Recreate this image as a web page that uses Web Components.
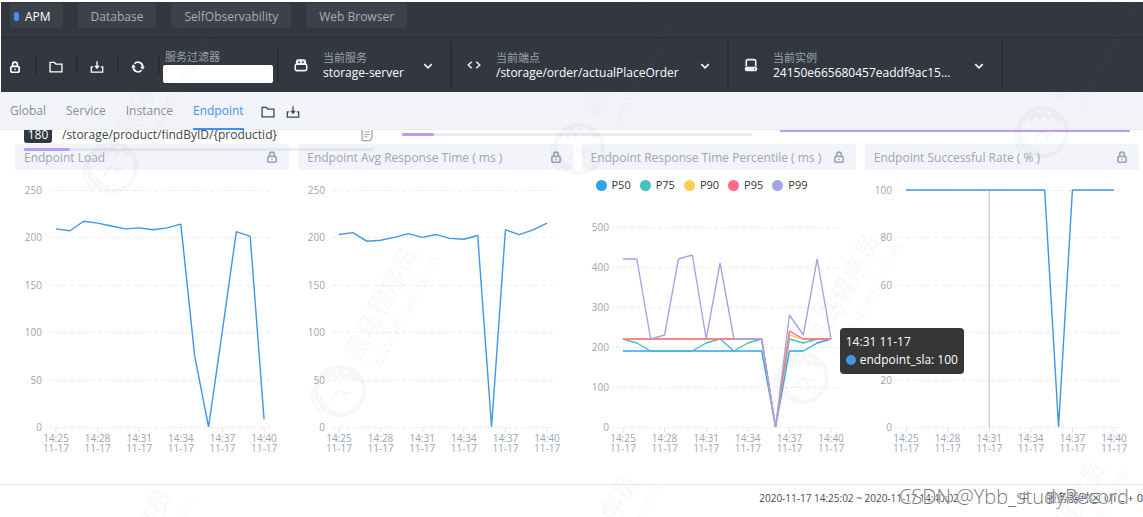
<!DOCTYPE html>
<html lang="zh-CN">
<head>
<meta charset="utf-8">
<title>APM Dashboard</title>
<style>
  html, body { margin: 0; }
  body { font-family: "Open Sans", "Noto Sans", "Noto Sans CJK SC", sans-serif; font-size: 12px; color: #3d444f; background: #fff; }
</style>
</head>
<body>
<apm-app></apm-app>

<script>
const define = (name, html, setup) => {
  const template = document.createElement('template');
  template.innerHTML = html;
  customElements.define(name, class extends HTMLElement {
    constructor() {
      super();
      this.attachShadow({ mode: 'open' }).append(template.content.cloneNode(true));
    }
    connectedCallback() { if (setup) setup(this, this.shadowRoot); }
  });
};

const ICONS = {
  lock: '<rect x="3.2" y="7.2" width="9.6" height="6.8" rx="2" stroke-width="1.9"/><path d="M5.3 7V5.1a2.7 2.7 0 0 1 5.4 0V7" stroke-width="1.9"/><path d="M8 9.8v1.8" stroke-width="1.5"/>',
  folder: '<path d="M1.2 13.6V2.8h5l1.8 2h6.8v8.8z" stroke-width="1.5"/>',
  download: '<path d="M3.6 7.8H1.5v6h13v-6h-2.1" stroke-width="1.5"/><path d="M8 1.5v6" stroke-width="1.5"/><path d="M4.8 6.6h6.4L8 10.6z" fill="currentColor" stroke="none"/>',
  refresh: '<path d="M4 4.3A5.4 5.4 0 0 1 13.4 8M12 11.7A5.4 5.4 0 0 1 2.6 8" stroke-width="2"/><path d="M10.6 7.6h5.2l-2.6 3.6zM.2 8.4h5.2L2.8 4.8z" fill="currentColor" stroke="none"/>',
  service: '<path d="M2.8 7V4.2a2 2 0 0 1 2-2h6.4a2 2 0 0 1 2 2V7" fill="currentColor" stroke-width="1.4"/><circle cx="5.8" cy="4.8" r="1.1" fill="#333840" stroke="none"/><circle cx="10.2" cy="4.8" r="1.1" fill="#333840" stroke="none"/><rect x="1.4" y="7.2" width="13.2" height="7.2" rx="1.8" stroke-width="1.8"/>',
  code: '<path d="M5.4 4.2 1.4 8l4 3.8M10.6 4.2l4 3.8-4 3.8" stroke-width="1.7"/>',
  instance: '<path d="M2.6 9.6V3.8a2 2 0 0 1 2-2h6.8a2 2 0 0 1 2 2v5.8" stroke-width="1.9"/><rect x="1" y="10" width="14" height="5" rx="1.8" fill="currentColor" stroke="none"/><circle cx="12" cy="12.5" r=".8" fill="#333840" stroke="none"/>',
  chevron: '<path d="M3 5.6 8 10.4l5-4.8" stroke-width="2.4"/>',
  note: '<path d="M2.4 1.4h11.2v10.4l-2.4 2.6H4a1.6 1.6 0 0 1-1.6-1.6z" stroke-width="1.5"/><path d="M5 4.6h6M5 7.4h6M5 10.2h3.4" stroke-width="1.3"/>'
};

const flat = (v, n) => Array(n).fill(v);
const CHARTS = {
  load: [{ color: '#3f96e3', data: [209, 207, 217, 215, 212, 209, 210, 208, 210, 214, 75, 0, 102, 206, 201, 8] }],
  avg: [{ color: '#3f96e3', data: [203, 205, 196, 197, 200, 204, 200, 203, 199, 198, 202, 0, 208, 203, 208, 215] }],
  percentile: [
    { color: '#30a4eb', data: [...flat(190, 11), 0, 190, 190, 210, 220] },
    { color: '#45bfc0', data: [220, 210, 190, 190, 190, 190, 210, 220, 190, 210, 220, 0, 220, 210, 220, 220] },
    { color: '#ffcc55', data: [...flat(220, 11), 0, 230, 220, 220, 220] },
    { color: '#ff6a84', data: [...flat(220, 11), 0, 240, 220, 220, 220] },
    { color: '#a0a7e6', data: [420, 420, 220, 230, 420, 430, 220, 410, 220, 220, 220, 0, 280, 230, 420, 220] }
  ],
  sla: [{ color: '#3f96e3', data: [...flat(100, 11), 0, ...flat(100, 4)] }]
};

define('ui-icon', `
  <style>
    :host { display: block; flex: none; width: 14px; height: 14px; }
    svg { display: block; width: 100%; height: 100%; fill: none; stroke: currentColor; }
  </style>
  <svg viewBox="0 0 16 16" aria-hidden="true"></svg>`,
  (el, root) => { root.querySelector('svg').innerHTML = ICONS[el.getAttribute('name')]; });

define('nav-tab', `
  <style>
    :host { display: block; }
    button { display: flex; align-items: center; gap: 6px; height: 25px; padding: 2px 13px 0; border: 0; border-radius: 4px;
      background: #3d424a; color: #a5adb9; font: inherit; line-height: 16px; white-space: nowrap; cursor: pointer; }
    :host([active]) button { color: #fff; padding: 2px 12px 0 4px; }
    :host([active]) button::before { content: ""; width: 5px; height: 9px; border-radius: 2px; background: #448dfe; }
  </style>
  <button type="button"><slot></slot></button>`);

define('icon-button', `
  <style>
    :host { display: block; }
    button { display: block; padding: 0; border: 0; background: none; color: inherit; cursor: pointer; }
  </style>
  <button type="button"><ui-icon></ui-icon></button>`,
  (el, root) => {
    root.querySelector('button').setAttribute('aria-label', el.getAttribute('label'));
    root.querySelector('button').innerHTML = `<ui-icon name="${el.getAttribute('icon')}"></ui-icon>`;
  });
</script>
<script>
define('entity-select', `
  <style>
    :host { display: flex; align-items: center; box-sizing: border-box; height: 48px; padding: 0 16px 0 15px;
      border-right: 2px solid #282c33; color: #fff; }
    .icon { margin-right: 15px; color: #f0f1f3; }
    .field { flex: 1; min-width: 0; padding-top: 1px; }
    label { display: block; font-size: 11px; line-height: 14px; color: #9aa2ae; }
    select { display: block; width: 100%; height: 16px; padding: 0; border: 0; appearance: none; background: none;
      color: #fff; font: inherit; font-size: 12px; line-height: 16px; }
    .arrow { width: 12px; height: 12px; padding-top: 2px; color: #f0f1f3; }
  </style>
  <span class="icon"></span>
  <div class="field"><label for="value"></label><select id="value"><option></option></select></div>
  <ui-icon class="arrow" name="chevron"></ui-icon>`,
  (el, root) => {
    root.querySelector('.icon').innerHTML = `<ui-icon name="${el.getAttribute('icon')}"></ui-icon>`;
    root.querySelector('label').textContent = el.getAttribute('label');
    root.querySelector('option').textContent = el.getAttribute('value');
  });

define('app-header', `
  <style>
    :host { display: block; margin-left: 1px; background: #333840; color: #fff; }
    nav { display: flex; gap: 15px; height: 36px; padding: 1px 9px 0; box-sizing: border-box; border-bottom: 1px solid #282c33; }
    .tools { display: flex; align-items: center; height: 54px; }
    .actions { display: flex; align-items: center; padding-left: 7px; }
    .actions icon-button { display: flex; align-items: flex-end; height: 18px; padding-right: 13px; }
    .actions icon-button + icon-button { padding-left: 12px; border-left: 2px solid #282c33; }
    .filter { display: flex; flex-direction: column; box-sizing: border-box; height: 36px; width: 119px; padding: 2px 4px 0 3px; border-right: 2px solid #282c33; }
    .filter label { font-size: 11px; line-height: 16px; color: #9aa2ae; padding-left: 2px; }
    .filter input { box-sizing: border-box; width: 100%; height: 18px; border: 0; border-radius: 2px; background: #fff; font: inherit; }
    .bar { width: 2px; height: 18px; background: #282c33; }
    .service { flex: 0 1 173px; }
    .endpoint { flex: 0 1 277px; }
    .instance { flex: 0 1 274px; }
  </style>
  <nav>
    <nav-tab active>APM</nav-tab><nav-tab>Database</nav-tab><nav-tab>SelfObservability</nav-tab><nav-tab>Web Browser</nav-tab>
  </nav>
  <div class="tools">
    <div class="actions">
      <icon-button icon="lock" label="锁定"></icon-button>
      <icon-button icon="folder" label="打开"></icon-button>
      <icon-button icon="download" label="导出"></icon-button>
      <icon-button icon="refresh" label="刷新"></icon-button>
      <span class="bar"></span>
    </div>
    <div class="filter"><label for="filter">服务过滤器</label><input id="filter" type="text"></div>
    <entity-select class="service" icon="service" label="当前服务" value="storage-server"></entity-select>
    <entity-select class="endpoint" icon="code" label="当前端点" value="/storage/order/actualPlaceOrder"></entity-select>
    <entity-select class="instance" icon="instance" label="当前实例" value="24150e665680457eaddf9ac15..."></entity-select>
  </div>`);

define('view-tabs', `
  <style>
    :host { display: flex; align-items: center; box-sizing: border-box; height: 38px; padding: 0 10px; background: #f3f4f9;
      box-shadow: inset 0 -1px #ebecf0; position: relative; z-index: 2; color: #434a55; }
    nav { display: flex; gap: 20px; height: 100%; margin-right: 17px; }
    a { display: flex; align-items: center; box-sizing: border-box; height: 100%; padding-top: 2px; border-bottom: 2px solid transparent;
      color: #878e99; text-decoration: none; line-height: 16px; }
    a.on { color: #448dfe; border-color: #448dfe; }
    .more { display: flex; gap: 11px; padding-top: 2px; }
  </style>
  <nav>
    <a href="#global">Global</a><a href="#service">Service</a><a href="#instance">Instance</a>
    <a href="#endpoint" class="on" aria-current="page">Endpoint</a>
  </nav>
  <div class="more"><icon-button icon="folder" label="打开"></icon-button><icon-button icon="download" label="导出"></icon-button></div>`);

define('usage-bar', `
  <style>
    :host { display: block; height: 3px; border-radius: 2px; background: rgba(196, 193, 228, .34); }
    i { display: block; height: 3px; border-radius: 2px; background: #bf99f8; width: var(--share); }
  </style><i></i>`,
  (el, root) => root.querySelector('i').style.setProperty('--share', el.getAttribute('share') + '%'));

/* The tail of three ranked lists, scrolled partly under the view tabs. */
define('ranked-lists', `
  <style>
    :host { display: grid; position: relative; z-index: 1; grid-template-columns: repeat(3, 1fr); column-gap: 28px; height: 18px; margin-top: -4px; padding: 0 13px 0 24px; }
    .row { display: flex; align-items: center; height: 17px; margin-bottom: 5px; }
    b { font-weight: 400; width: 28px; height: 17px; line-height: 17px; border-radius: 3px; background: #333840; color: #fff; text-align: center; margin-right: 10px; }
    .path { flex: 1; line-height: 17px; white-space: nowrap; }
    .row icon-button { color: #9da5b2; }
    .second { padding-top: 7px; }
    .third { padding-top: 3px; }
  </style>
  <div>
    <div class="row"><b>180</b><span class="path">/storage/product/findByID/{productid}</span><icon-button icon="note" label="复制"></icon-button></div>
    <usage-bar share="13"></usage-bar>
  </div>
  <div class="second"><usage-bar share="9"></usage-bar></div>
  <div class="third"><usage-bar share="100"></usage-bar></div>`);

const SVG_NS = 'http://www.w3.org/2000/svg';
const TIMES = Array.from({ length: 16 }, (_, i) => '14:' + (25 + i));

define('line-chart', `
  <style>
    :host { display: block; position: relative; flex: 1; min-height: 0; }
    svg { position: absolute; display: block; width: 100%; height: 100%; overflow: visible; }
    text { font-size: 10px; fill: #9da5b2; }
    .grid { stroke: #eaecef; stroke-dasharray: 4 3; }
    .tick { stroke: #e2e4e8; }
    .pointer { stroke: #bbb; }
    polyline { fill: none; stroke-width: 1.4; stroke-linejoin: bevel; }
  </style>
  <svg role="img"></svg>`,
  (el, root) => {
    const svg = root.querySelector('svg');
    const add = (tag, attrs, text) => {
      const node = document.createElementNS(SVG_NS, tag);
      for (const key in attrs) node.setAttribute(key, attrs[key]);
      if (text !== undefined) node.textContent = text;
      svg.append(node);
    };
    const draw = () => {
      const max = +el.getAttribute('max'), step = +el.getAttribute('step');
      const left = 34, right = el.clientWidth - 18, top = +el.getAttribute('top'), bottom = el.clientHeight - 33;
      const band = (right - left) / TIMES.length;
      const px = i => left + band * (i + 0.5);
      const py = v => bottom - (bottom - top) * v / max;
      svg.replaceChildren();
      for (let v = 0; v <= max; v += step) {
        const y = Math.round(py(v)) + 0.5;
        add('line', { class: 'grid', x1: left, x2: right, y1: y, y2: y });
        add('text', { x: left - 7, y: y + 3, 'text-anchor': 'end' }, v);
      }
      TIMES.forEach((time, i) => {
        if (i % 3) return;
        add('line', { class: 'tick', x1: px(i), x2: px(i), y1: bottom, y2: bottom + 5 });
        add('text', { x: px(i), y: bottom + 15, 'text-anchor': 'middle' }, time);
        add('text', { x: px(i), y: bottom + 25, 'text-anchor': 'middle' }, '11-17');
      });
      if (el.hasAttribute('pointer')) {
        const x = Math.round(px(+el.getAttribute('pointer'))) + 0.25;
        add('line', { class: 'pointer', x1: x, x2: x, y1: top, y2: bottom });
      }
      for (const s of CHARTS[el.dataset.key]) {
        add('polyline', { stroke: s.color, points: s.data.map((v, i) => px(i) + ',' + py(v)).join(' ') });
      }
    };
    draw();
    new ResizeObserver(draw).observe(el);
  });

define('chart-panel', `
  <style>
    :host { display: flex; flex-direction: column; min-width: 0; height: 316px; position: relative; }
    header { display: flex; align-items: center; justify-content: space-between; box-sizing: border-box; height: 26px; padding: 0 10px 0 9px;
      background: #f3f4f9; border-radius: 2px; color: #9da5b2; }
    h2 { margin: 0; padding-top: 1px; font-size: 12px; font-weight: 400; line-height: 16px; white-space: nowrap; }
  </style>
  <header><h2></h2><icon-button icon="lock" label="锁定"></icon-button></header>
  <slot></slot>`,
  (el, root) => { root.querySelector('h2').textContent = el.getAttribute('heading'); });

define('chart-legend', `
  <style>
    :host { display: flex; align-items: center; gap: 9px; height: 30px; padding-left: 14px; font-size: 11px; color: #333; }
    span { display: flex; align-items: center; gap: 5px; line-height: 14px; }
    i { width: 11px; height: 11px; border-radius: 50%; }
  </style>
  <span><i style="background:#30a4eb"></i>P50</span><span><i style="background:#45bfc0"></i>P75</span>
  <span><i style="background:#ffcc55"></i>P90</span><span><i style="background:#ff6a84"></i>P95</span>
  <span><i style="background:#a0a7e6"></i>P99</span>`);

define('chart-tooltip', `
  <style>
    :host { position: absolute; left: -25px; top: 184px; box-sizing: border-box; height: 46px; padding: 5px 6px; border-radius: 4px;
      background: rgba(50, 50, 50, .98); color: #fff; line-height: 18px; white-space: nowrap; z-index: 2; }
    div { display: flex; align-items: center; gap: 4px; }
    i { width: 10px; height: 10px; border-radius: 50%; background: #3f96e3; }
  </style>
  <div>14:31 11-17</div><div><i></i>endpoint_sla: 100</div>`);

define('app-footer', `
  <style>
    :host { display: flex; align-items: center; justify-content: flex-end; box-sizing: border-box; height: 33px; padding-bottom: 6px;
      border-top: 1px solid #e8e9eb; font-size: 11px; line-height: 16px; color: #434a5c; white-space: nowrap; overflow: hidden; }
    time { font-size: 10px; }
    .lang { margin: 0 16px 0 60px; }
  </style>
  <time>2020-11-17 14:25:02 ~ 2020-11-17 14:40:02</time><span class="lang">中</span><span>服务器时区 UTC + 0</span>`);

/* Faint repeated stamps and the author's credit, laid over the whole page. */
define('page-watermark', `
  <style>
    :host { position: absolute; inset: 0; overflow: hidden; pointer-events: none; z-index: 5; }
    svg { position: absolute; left: 0; top: 0; width: 100%; height: 100%; }
    .name { font: 700 25px "Noto Sans CJK SC", sans-serif; fill: #555; fill-opacity: .045; }
    .site { font: 400 15px "Open Sans", sans-serif; fill: #e05050; fill-opacity: .07; }
    .logo { fill: none; stroke: #555; opacity: .045; }
    p { position: absolute; right: 14px; bottom: 7px; margin: 0; font: 300 20px/26px "Open Sans", sans-serif; color: rgba(85, 85, 85, .8);
      text-shadow: 0 0 1px #fff, 1px 1px 1px #fff; }
  </style>
  <svg aria-hidden="true"></svg>
  <p>CSDN @Ybb_studyRecord</p>`,
  (el, root) => {
    const spots = [[112, 167], [340, 391], [579, 149], [803, 378], [1043, 132], [95, 633], [561, 619], [1028, 605]];
    root.querySelector('svg').innerHTML = spots.map(([x, y]) => `
      <g transform="translate(${x} ${y})">
        <g class="logo"><circle r="24" stroke-width="4"/><path d="M-20-11-14-19-11-13-8-20-3-14 1-20 5-14 11-18 13-13 18-13" stroke-width="4"/><path d="M-9 10c4-4 3-8 9-10l6 3 5-2M3 3l3 6M-20 4c3 9 8 14 17 17" stroke-width="2"/><path d="M-27-5c-3 12 1 21 9 28" stroke-width="2"/></g>
        <g transform="rotate(-61.5)"><text class="name" x="34" y="3">黑马程序员</text><text class="site" x="38" y="25">www.itheima.com</text></g>
      </g>`).join('');
  });

define('apm-app', `
  <style>
    :host { display: flex; flex-direction: column; position: relative; box-sizing: border-box; min-height: 100vh; padding-top: 2px; overflow: hidden; }
    main { flex: 1; }
    .charts { display: grid; grid-template-columns: repeat(4, minmax(0, 1fr)); column-gap: 9px; padding: 0 4px 0 15px; }
  </style>
  <app-header></app-header>
  <view-tabs></view-tabs>
  <main>
    <ranked-lists></ranked-lists>
    <div class="charts">
      <chart-panel heading="Endpoint Load"><line-chart data-key="load" max="250" step="50" top="20"></line-chart></chart-panel>
      <chart-panel heading="Endpoint Avg Response Time ( ms )"><line-chart data-key="avg" max="250" step="50" top="20"></line-chart></chart-panel>
      <chart-panel heading="Endpoint Response Time Percentile ( ms )"><chart-legend></chart-legend><line-chart data-key="percentile" max="500" step="100" top="27"></line-chart></chart-panel>
      <chart-panel heading="Endpoint Successful Rate ( % )"><line-chart data-key="sla" max="100" step="20" top="20" pointer="6"></line-chart><chart-tooltip></chart-tooltip></chart-panel>
    </div>
  </main>
  <app-footer></app-footer>
  <page-watermark></page-watermark>`);
</script>
</body>
</html>
